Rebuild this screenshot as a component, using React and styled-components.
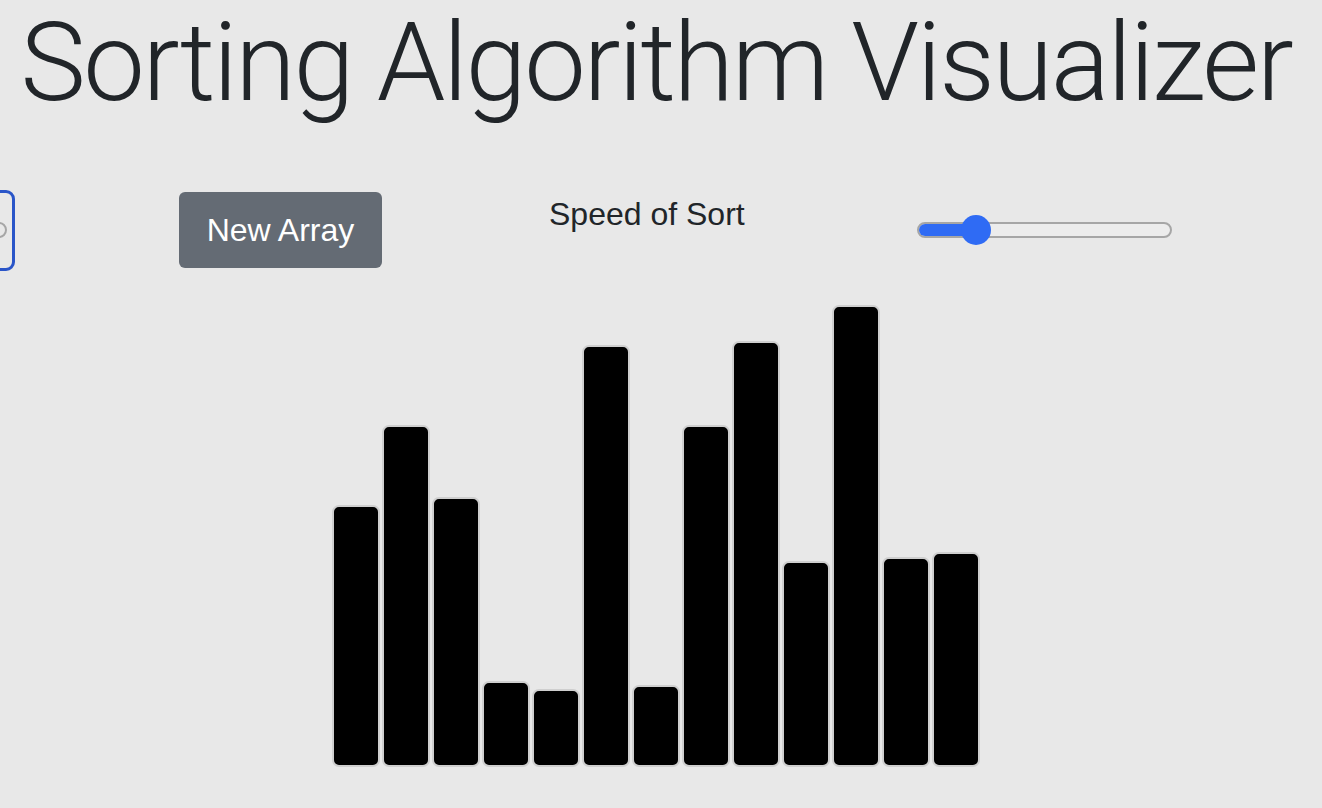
import React, { useState } from "react";
import styled, { createGlobalStyle } from "styled-components";

const GlobalStyle = createGlobalStyle`
  html, body {
    margin: 0;
    padding: 0;
    background: #e8e8e8;
    overflow: hidden;
  }
  body {
    font-family: "Liberation Sans", Arial, sans-serif;
    color: #212529;
  }
`;

// heights of the bars, in px, as in the screenshot
const startArray = [262, 342, 270, 86, 78, 422, 82, 342, 426, 206, 462, 210, 215];

function App() {
  const [array] = useState(startArray);
  const [speed] = useState(23);

  return (
    <Page>
      <GlobalStyle />
      <Title>Sorting Algorithm Visualizer</Title>

      <Controls>
        <SizeControl>
          <Track grey />
        </SizeControl>

        <NewArrayButton>New Array</NewArrayButton>

        <Label>Speed of Sort</Label>

        <SpeedSlider>
          <Track>
            <Fill style={{ width: `${speed}%` }} />
          </Track>
          <Thumb style={{ left: `${speed}%` }} />
        </SpeedSlider>
      </Controls>

      <Bars>
        {array.map((h, i) => (
          <Bar key={i} style={{ height: `${h}px` }} />
        ))}
      </Bars>
    </Page>
  );
}

export default App;

const Page = styled.div`
  width: 1322px;
  height: 808px;
  display: flex;
  flex-direction: column;
`;

const Title = styled.h1`
  margin: 0;
  padding-right: 10px;
  text-align: center;
  font-family: Roboto, "Liberation Sans", sans-serif;
  font-weight: 300;
  font-size: 110px;
  line-height: 1.15;
  letter-spacing: -2.35px;
  white-space: nowrap;
`;

const Controls = styled.div`
  display: flex;
  align-items: center;
  margin-top: 63px;
  margin-left: -185px;
  height: 81px;
`;

// focused "size of array" slider, mostly off the left edge
const SizeControl = styled.div`
  box-sizing: border-box;
  width: 200px;
  height: 81px;
  border: 3px solid #2a55c8;
  border-radius: 9px;
  display: flex;
  align-items: center;
  padding: 0 5px;
`;

const NewArrayButton = styled.button`
  margin-left: 164px;
  width: 203px;
  height: 76px;
  border: none;
  border-radius: 6px;
  background: #646b74;
  color: #fff;
  font-family: "Liberation Sans", Arial, sans-serif;
  font-size: 32px;
  font-weight: 400;
  cursor: pointer;
`;

const Label = styled.div`
  align-self: flex-start;
  margin-left: 167px;
  width: 199px;
  font-size: 32px;
  line-height: 48px;
  white-space: nowrap;
`;

const SpeedSlider = styled.div`
  position: relative;
  margin-left: 169px;
  width: 255px;
  height: 30px;
  display: flex;
  align-items: center;
`;

const Track = styled.div`
  position: relative;
  box-sizing: border-box;
  width: 100%;
  height: 16px;
  border-radius: 8px;
  border: 2px solid #a6a6a6;
  background: ${(p) => (p.grey ? "transparent" : "#ececec")};
  overflow: hidden;
`;

const Fill = styled.div`
  position: absolute;
  left: -2px;
  top: -2px;
  bottom: -2px;
  background: #2f6bf4;
  border-radius: 8px 0 0 8px;
`;

const Thumb = styled.div`
  position: absolute;
  top: 50%;
  width: 30px;
  height: 30px;
  margin-left: -15px;
  margin-top: -15px;
  border-radius: 50%;
  background: #2f6bf4;
`;

const Bars = styled.div`
  display: flex;
  justify-content: center;
  align-items: flex-end;
  height: 464px;
  margin-top: 32px;
  padding-right: 10px;
`;

const Bar = styled.div`
  box-sizing: border-box;
  width: 48px;
  margin: 0 1px;
  background: #000;
  border: 2px solid #cfcfcf;
  border-radius: 7px;
`;
